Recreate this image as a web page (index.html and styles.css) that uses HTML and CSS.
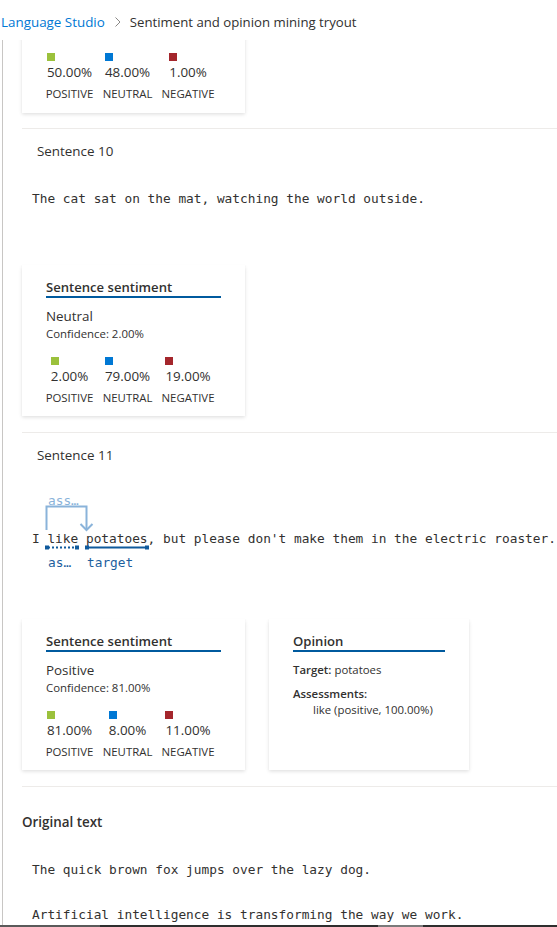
FILE: index.html
```html
<!DOCTYPE html>
<html lang="en">
<head>
<meta charset="utf-8">
<title>Sentiment and opinion mining tryout</title>
<link rel="stylesheet" href="styles.css">
</head>
<body>
<div class="page">
  <header class="breadcrumb">
    <a class="crumb-link" href="#">Language Studio</a>
    <svg class="chevron" width="16" height="12" viewBox="0 0 16 12"><path d="M5.5 1.5 L10 6 L5.5 10.5" fill="none" stroke="#8a8886" stroke-width="1"/></svg>
    <span class="crumb-current">Sentiment and opinion mining tryout</span>
  </header>

  <main class="results">
    <div class="cards first-cards">
      <div class="card sentiment-card partial-card">
        <div class="dist">
          <div class="dist-col"><div class="dist-val"><span class="sq sq-pos"></span><span class="pct">50.00%</span></div><div class="dist-lbl">POSITIVE</div></div>
          <div class="dist-col"><div class="dist-val"><span class="sq sq-neu"></span><span class="pct">48.00%</span></div><div class="dist-lbl">NEUTRAL</div></div>
          <div class="dist-col"><div class="dist-val"><span class="sq sq-neg"></span><span class="pct">1.00%</span></div><div class="dist-lbl">NEGATIVE</div></div>
        </div>
      </div>
    </div>

    <section class="sentence">
      <div class="sentence-title">Sentence 10</div>
      <p class="mono sentence-text">The cat sat on the mat, watching the world outside.</p>
      <div class="cards">
        <div class="card sentiment-card">
          <div class="card-title">Sentence sentiment</div>
          <div class="sent-label">Neutral</div>
          <div class="confidence">Confidence: 2.00%</div>
          <div class="dist">
            <div class="dist-col"><div class="dist-val"><span class="sq sq-pos"></span><span class="pct">2.00%</span></div><div class="dist-lbl">POSITIVE</div></div>
            <div class="dist-col"><div class="dist-val"><span class="sq sq-neu"></span><span class="pct">79.00%</span></div><div class="dist-lbl">NEUTRAL</div></div>
            <div class="dist-col"><div class="dist-val"><span class="sq sq-neg"></span><span class="pct">19.00%</span></div><div class="dist-lbl">NEGATIVE</div></div>
          </div>
        </div>
      </div>
    </section>

    <section class="sentence">
      <div class="sentence-title">Sentence 11</div>
      <div class="annotated">
        <svg class="anno-svg" width="200" height="80" viewBox="0 0 200 80">
          <path d="M24.5 37 V13.5 H64.5 V37" fill="none" stroke="#8ab3da" stroke-width="2"/>
          <path d="M58.5 31 L64.5 37 L70.5 31" fill="none" stroke="#8ab3da" stroke-width="2"/>
          <line x1="26" y1="54.5" x2="54" y2="54.5" stroke="#0f5a9c" stroke-width="2" stroke-dasharray="2 2"/>
          <rect x="23" y="52.5" width="4" height="4" fill="#0f5a9c"/>
          <rect x="53" y="52.5" width="4" height="4" fill="#0f5a9c"/>
          <line x1="65" y1="54.5" x2="125" y2="54.5" stroke="#0f5a9c" stroke-width="2"/>
          <rect x="63" y="52.5" width="4" height="4" fill="#0f5a9c"/>
          <rect x="123" y="52.5" width="4" height="4" fill="#0f5a9c"/>
        </svg>
        <span class="mono anno-label anno-top">ass…</span>
        <span class="mono anno-label anno-as">as…</span>
        <span class="mono anno-label anno-target">target</span>
        <p class="mono sentence-text">I like potatoes, but please don't make them in the electric roaster.</p>
      </div>
      <div class="cards">
        <div class="card sentiment-card">
          <div class="card-title">Sentence sentiment</div>
          <div class="sent-label">Positive</div>
          <div class="confidence">Confidence: 81.00%</div>
          <div class="dist">
            <div class="dist-col"><div class="dist-val"><span class="sq sq-pos"></span><span class="pct">81.00%</span></div><div class="dist-lbl">POSITIVE</div></div>
            <div class="dist-col"><div class="dist-val"><span class="sq sq-neu"></span><span class="pct">8.00%</span></div><div class="dist-lbl">NEUTRAL</div></div>
            <div class="dist-col"><div class="dist-val"><span class="sq sq-neg"></span><span class="pct">11.00%</span></div><div class="dist-lbl">NEGATIVE</div></div>
          </div>
        </div>
        <div class="card opinion-card">
          <div class="card-title">Opinion</div>
          <div class="op-line"><span class="op-key">Target:</span> potatoes</div>
          <div class="op-key op-assess">Assessments:</div>
          <div class="op-item">like (positive, 100.00%)</div>
        </div>
      </div>
    </section>

    <section class="original">
      <div class="original-title">Original text</div>
      <p class="mono orig-text">The quick brown fox jumps over the lazy dog.</p>
      <p class="mono orig-text">Artificial intelligence is transforming the way we work.</p>
    </section>
  </main>

  <div class="bottom-bar">
    <span class="seg seg-a"></span><span class="seg seg-b"></span><span class="seg seg-c"></span><span class="seg seg-d"></span>
  </div>
</div>
</body>
</html>
```

FILE: styles.css
```css
* { box-sizing: border-box; }

html, body {
  margin: 0;
  padding: 0;
  background: #ffffff;
}

body {
  font-family: "Open Sans", "Noto Sans", "Liberation Sans", sans-serif;
  color: #323130;
  font-size: 13.3px;
}

.page {
  height: 927px;
  display: flex;
  flex-direction: column;
  overflow: hidden;
}

.breadcrumb {
  height: 40px;
  flex: 0 0 40px;
  display: flex;
  align-items: center;
  padding: 3px 0 0 1px;
  font-size: 13.4px;
  white-space: nowrap;
}

.crumb-link {
  color: #0078d4;
  text-decoration: none;
  font-size: 13.4px;
}

.chevron {
  margin: 1px 4px 0 5px;
}

.crumb-current {
  color: #323130;
  font-size: 13.2px;
}

.results {
  flex: 1 1 auto;
  overflow: hidden;
  margin-left: 2px;
  border-left: 1px solid #c8c6c4;
  padding-left: 19px;
}

.mono {
  font-family: "DejaVu Sans Mono", "Liberation Mono", monospace;
  font-size: 12.8px;
  line-height: 20px;
  color: #323130;
}

/* cards */
.cards {
  display: flex;
  gap: 24px;
  align-items: flex-start;
}

.first-cards {
  margin-top: -7px;
  margin-bottom: 15px;
}

.card {
  background: #ffffff;
  box-shadow: 0 1.6px 3.6px rgba(0, 0, 0, 0.13), 0 0.3px 0.9px rgba(0, 0, 0, 0.11);
  padding: 12px 24px 11px;
  height: 151px;
}

.partial-card {
  height: auto;
  padding-top: 20px;
}

.partial-card .dist {
  margin-top: 0;
}

.sentiment-card { width: 223px; }
.opinion-card { width: 200px; }

.card-title {
  font-weight: 600;
  font-size: 13.1px;
  line-height: 17px;
  padding-top: 2px;
  border-bottom: 2px solid #005a9e;
}

.sent-label {
  margin-top: 9px;
  font-size: 13.4px;
  line-height: 18px;
}

.confidence {
  margin-top: 1px;
  font-size: 11.4px;
  line-height: 16px;
}

.dist {
  margin-top: 15px;
  display: grid;
  grid-template-columns: 47px 49px 52px;
  column-gap: 10px;
}

.dist-col {
  display: flex;
  flex-direction: column;
  align-items: center;
}

.dist-val {
  display: flex;
  flex-direction: column;
  align-items: flex-start;
  font-size: 13.4px;
  line-height: 20px;
  white-space: nowrap;
}

.pct {
  margin-top: 1px;
}

.sq {
  display: block;
  width: 8px;
  height: 8px;
}
.sq-pos { background: #9bc13c; }
.sq-neu { background: #0078d4; }
.sq-neg { background: #a4262c; }

.dist-lbl {
  margin-top: 4px;
  font-size: 11.4px;
  line-height: 16px;
  white-space: nowrap;
}

/* opinion */
.op-line {
  margin-top: 10px;
  font-size: 11.4px;
  line-height: 16px;
}

.op-key { font-weight: 600; }

.op-assess {
  margin-top: 8px;
  font-size: 11.4px;
  line-height: 16px;
}

.op-item {
  padding-left: 20px;
  font-size: 11.4px;
  line-height: 16px;
}

/* sections */
.sentence {
  border-top: 1px solid #edebe9;
  padding-top: 12px;
  padding-bottom: 16px;
}

.sentence-title {
  padding-left: 15px;
  font-size: 13.4px;
  line-height: 20px;
}

.sentence-text {
  margin: 28px 0 56px;
  padding-left: 10px;
  white-space: nowrap;
}

.annotated {
  position: relative;
  margin: 28px 0 46px;
  padding: 36px 0 24px;
}

.annotated .sentence-text {
  margin: 0;
}

.anno-svg {
  position: absolute;
  left: 0;
  top: 0;
}

.anno-label {
  position: absolute;
  line-height: 16px;
}

.anno-top {
  left: 26px;
  top: 0;
  color: #8ab3da;
}

.anno-as {
  left: 26px;
  top: 62px;
  color: #1d5f9e;
}

.anno-target {
  left: 65px;
  top: 62px;
  color: #1d5f9e;
}

.original {
  border-top: 1px solid #edebe9;
  padding-top: 25px;
}

.original-title {
  font-weight: 600;
  font-size: 13.4px;
  line-height: 20px;
}

.orig-text {
  margin: 28px 0 0;
  padding-left: 10px;
  white-space: nowrap;
}

.orig-text + .orig-text {
  margin-top: 25px;
}

/* bottom bar */
.bottom-bar {
  flex: 0 0 2px;
  height: 2px;
  display: flex;
}
.seg { display: block; height: 2px; }
.seg-a { width: 100px; background: #5a5a5a; }
.seg-b { width: 278px; background: #2e2e2e; }
.seg-c { width: 45px; background: #7a7a7a; }
.seg-d { flex: 1; background: #2e2e2e; }
```
